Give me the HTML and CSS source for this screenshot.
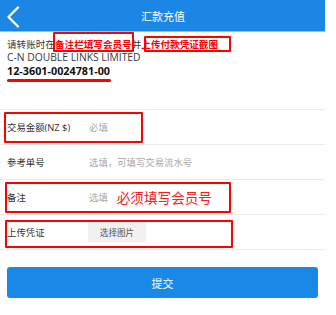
FILE: index.html
```html
<!DOCTYPE html>
<html lang="zh-CN">
<head>
<meta charset="utf-8">
<title>汇款充值</title>
<link rel="stylesheet" href="styles.css">
</head>
<body>
<div class="page">
  <header class="topbar">
    <svg class="back" width="14" height="22" viewBox="0 0 14 22"><polyline points="12,1.5 2.5,11 12,20.5" fill="none" stroke="#fff" stroke-width="2.4" stroke-linecap="round" stroke-linejoin="round"/></svg>
    <h1 class="title">汇款充值</h1>
  </header>

  <section class="intro">
    <p class="line">请转账时在<span class="mark">备注栏填写会员号</span>并<span class="mark">上传付款凭证截图</span></p>
    <p class="line latin">C-N DOUBLE LINKS LIMITED</p>
    <p class="line acct">12-3601-0024781-00</p>
    <div class="underline"></div>
    <div class="box box-1"></div>
    <div class="box box-2"></div>
  </section>

  <form class="form">
    <div class="row">
      <span class="label">交易金额(NZ $)</span>
      <span class="ph">必填</span>
      <div class="box box-row1"></div>
    </div>
    <div class="row">
      <span class="label">参考单号</span>
      <span class="ph">选填，可填写交易流水号</span>
    </div>
    <div class="row">
      <span class="label">备注</span>
      <span class="ph">选填</span>
      <span class="note">必须填写会员号</span>
      <div class="box box-row3"></div>
    </div>
    <div class="row">
      <span class="label">上传凭证</span>
      <span class="pick">选择图片</span>
      <div class="box box-row4"></div>
    </div>
    <div class="actions">
      <button type="button" class="submit">提交</button>
    </div>
  </form>
</div>
</body>
</html>
```

FILE: styles.css
```css
* { box-sizing: border-box; margin: 0; padding: 0; }
body {
  margin: 0;
  background: #fff;
  font-family: "Open Sans", "Noto Sans", "Noto Sans CJK SC", sans-serif;
  color: #333;
}
.page {
  width: 325px;
  position: relative;
}
.topbar {
  height: 32px;
  background: #1b86e4;
  border-bottom: 1px solid #8ec4f3;
  display: flex;
  align-items: center;
  position: relative;
}
.back {
  position: absolute;
  left: 6px;
  top: 6px;
}
.title {
  flex: 1;
  text-align: center;
  color: #fff;
  font-size: 11px;
  font-weight: normal;
  font-family: "Noto Sans CJK SC", sans-serif;
  padding-left: 1px;
}
.intro {
  position: relative;
  padding: 6px 7px 0 7px;
  height: 78px;
  border-bottom: 1px solid #ececec;
}
.line {
  font-size: 9.6px;
  line-height: 13px;
  color: #3a3a3a;
  white-space: nowrap;
}
.latin {
  font-size: 10.3px;
}
.mark {
  color: #f00;
  font-weight: bold;
  font-family: "Noto Sans CJK SC", sans-serif;
}
.acct {
  font-weight: bold;
  color: #111;
  font-size: 10.8px;
}
.underline {
  width: 104px;
  height: 2.5px;
  background: #f00;
  border-radius: 2px;
  margin-top: 2px;
}
.box {
  position: absolute;
  border: 2px solid #f00;
  border-radius: 1px;
  pointer-events: none;
}
.box-1 { left: 53px; top: 0px; width: 81px; height: 20px; }
.box-2 { left: 144px; top: 4px; width: 87px; height: 16px; }

.form { display: block; }
.row {
  position: relative;
  height: 35px;
  border-bottom: 1px solid #ececec;
  display: flex;
  align-items: center;
  padding-left: 7px;
}
.label {
  width: 82px;
  font-size: 9.4px;
  color: #333;
  white-space: nowrap;
}
.ph {
  font-size: 9.4px;
  color: #a8a8a8;
}
.note {
  margin-left: 9px;
  font-size: 13.6px;
  color: #f42020;
  font-family: "Noto Sans CJK SC", sans-serif;
}
.pick {
  margin-left: -1px;
  width: 58px;
  height: 20px;
  background: #f1f1f1;
  font-size: 8.6px;
  color: #555;
  display: flex;
  align-items: center;
  justify-content: center;
}
.box-row1 { left: 4px; top: 2px; width: 139px; height: 31px; }
.box-row3 { left: 5px; top: 2px; width: 226px; height: 31px; }
.box-row4 { left: 5px; top: 5px; width: 228px; height: 28px; }

.actions {
  padding: 17px 7px 0 7px;
}
.submit {
  width: 311px;
  height: 31px;
  border: none;
  border-radius: 3px;
  background: #1a88e6;
  color: #fff;
  font-size: 11px;
  font-family: "Noto Sans CJK SC", sans-serif;
}
```
